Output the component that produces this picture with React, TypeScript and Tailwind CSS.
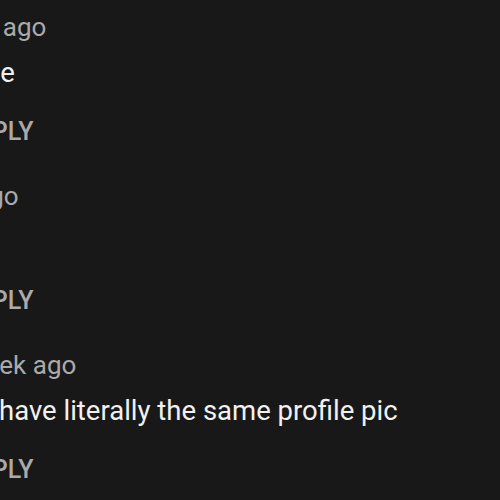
const comments = [
  { time: "s ago", timeShift: "-ml-[17px]", text: "same", textShift: "-ml-[53px]" },
  { time: "ago", timeShift: "-ml-[25px]", text: "\u00a0", textShift: "ml-0" },
  {
    time: "week ago",
    timeShift: "-ml-[34px]",
    text: "have literally the same profile pic",
    textShift: "-ml-[1px]",
  },
];

const Comment = ({ time, timeShift, text, textShift }: (typeof comments)[number]) => (
  <div className="flex flex-col">
    <p className={`${timeShift} whitespace-nowrap text-[26px] leading-[36px] text-[#aaaaaa]`}>{time}</p>
    <p className={`${textShift} mt-[8px] whitespace-nowrap text-[27.5px] leading-[40px] text-[#f1f1f1]`}>{text}</p>
    <p className="-ml-[38px] mt-[21px] text-[25px] font-medium uppercase leading-[36px] text-[#aaaaaa]">
      Reply
    </p>
  </div>
);

export default function App() {
  return (
    <div className="h-[500px] w-[500px] overflow-hidden bg-[#181818] font-['Roboto',sans-serif]">
      <div className="flex flex-col gap-[28px] pt-[9px]">
        {comments.map((c, i) => (
          <Comment key={i} {...c} />
        ))}
      </div>
    </div>
  );
}
